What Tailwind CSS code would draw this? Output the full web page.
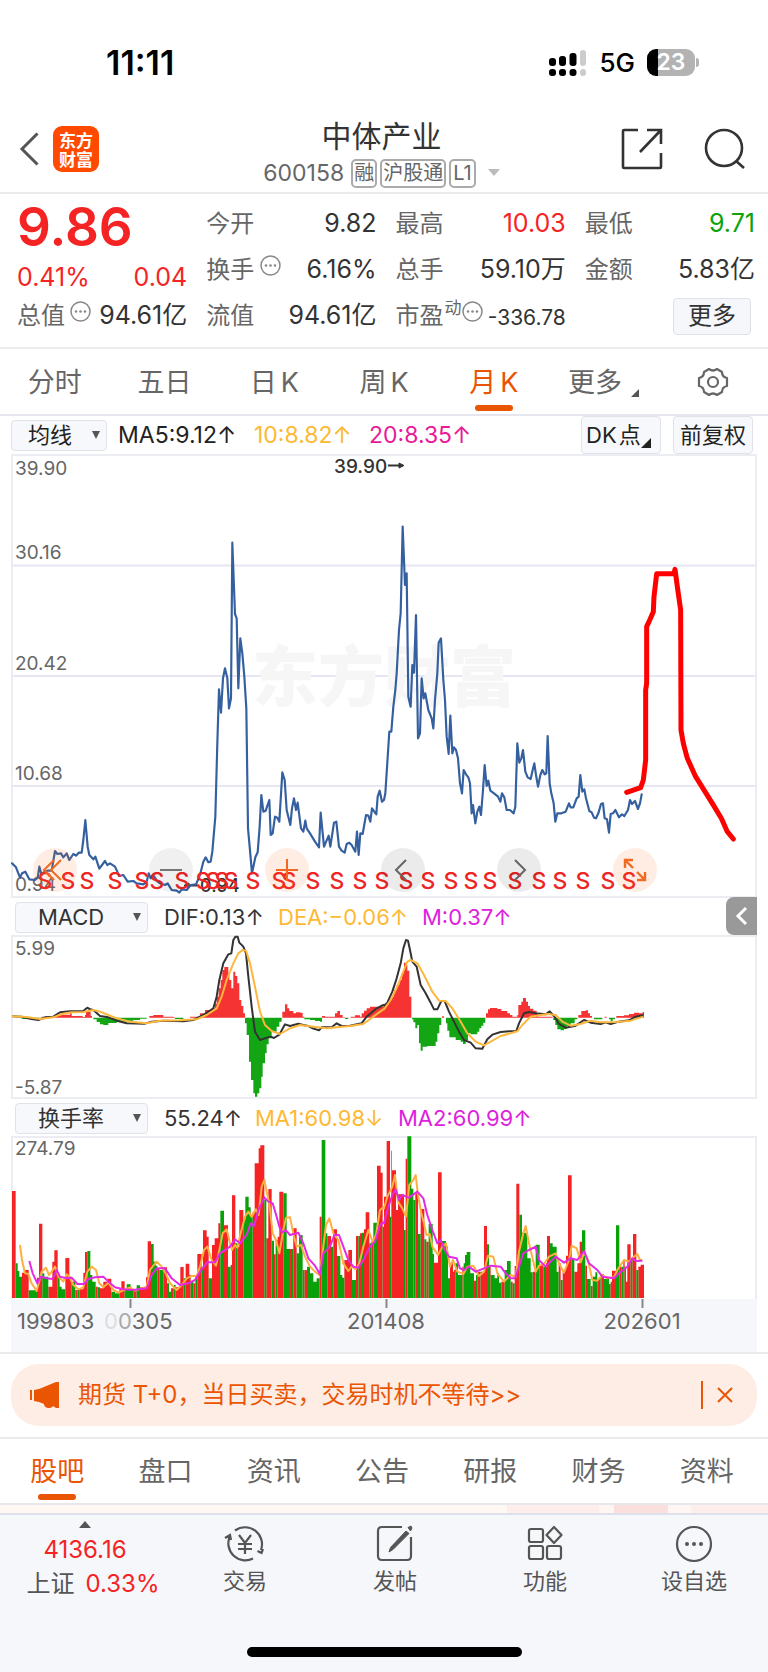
<!DOCTYPE html>
<html lang="zh-CN">
<head>
<meta charset="utf-8">
<meta name="viewport" content="width=device-width, initial-scale=1">
<title>中体产业 600158</title>
<script src="https://cdn.jsdelivr.net/npm/@tailwindcss/browser@4"></script>
</head>
<body class="bg-white font-['Inter','Noto_Sans_CJK_SC',sans-serif] text-[#333] min-h-screen flex flex-col">

<!-- status bar -->
<div class="flex items-center justify-between h-[100px] pt-[25px] pl-[106px] pr-[69px] text-black">
  <span class="text-[34px] leading-8 font-semibold">11:11</span>
  <div class="flex items-center gap-3">
    <svg class="w-[38px] h-[28px]" viewBox="0 0 38 28" aria-hidden="true">
      <g fill="#000"><rect x="0" y="9" width="7" height="8" rx="3"/><rect x="10" y="7" width="7" height="10" rx="3"/><rect x="20.500" y="4" width="7" height="13" rx="3"/><rect x="0" y="20" width="7" height="7" rx="3"/><rect x="10" y="20" width="7" height="7" rx="3"/><rect x="20.500" y="20" width="7" height="7" rx="3"/></g>
      <g fill="#ccc"><rect x="31" y="1" width="6" height="16" rx="3"/><rect x="31" y="20" width="6" height="7" rx="3"/></g>
    </svg>
    <span class="text-[26px] leading-8 font-medium">5G</span>
    <div class="flex items-center gap-px">
      <div class="w-[48px] h-[27px] rounded-[9px] bg-[linear-gradient(90deg,#000_23%,#b3b3b3_23%)] text-white text-[23px] leading-[27px] font-semibold text-center">23</div>
      <div class="w-[3px] h-[9px] rounded-r-full bg-[#b3b3b3]"></div>
    </div>
  </div>
</div>

<!-- title bar -->
<header class="flex items-center justify-between h-[94px] pl-[19px] pr-[22px] pt-[6px] border-b-2 border-[#ebebed]">
  <div class="flex items-center gap-[14px] w-[130px]">
    <button aria-label="返回"><svg class="w-5 h-[34px]" viewBox="0 0 20 34" fill="none" stroke="#555" stroke-width="3"><path d="M18.500 1.500 3 17l15.500 15.500"/></svg></button>
    <div class="w-[46px] h-[46px] rounded-[9px] bg-[#ff4a00] text-white text-[17px] leading-[19px] font-bold font-['Noto_Sans_CJK_SC',sans-serif] flex flex-col items-center justify-center"><span>东方</span><span>财富</span></div>
  </div>
  <div class="flex flex-col items-center pt-[10px]">
    <h1 class="text-[30px] leading-[38px]">中体产业</h1>
    <div class="flex items-center gap-[3px] h-9 text-[#666]">
      <span class="text-[23px] mr-[4px]">600158</span>
      <span class="border-2 border-[#aaa] rounded-[5px] px-px text-[20px] leading-[25px]">融</span>
      <span class="border-2 border-[#aaa] rounded-[5px] px-px text-[20px] leading-[25px]">沪股通</span>
      <span class="border-2 border-[#aaa] rounded-[5px] px-[2px] text-[20px] leading-[25px]">L1</span>
      <svg class="w-3 h-2 ml-[9px]" viewBox="0 0 12 8" fill="#bbb"><path d="M0 0h12L6 7z"/></svg>
    </div>
  </div>
  <div class="flex items-center justify-end gap-[41px] w-[132px]">
    <button aria-label="分享"><svg class="w-[42px] h-[42px]" viewBox="0 0 42 42" fill="none" stroke="#333" stroke-width="2.600"><path d="M17 2H3q-1 0-1 1v36q0 1 1 1h36q1 0 1-1V25M26 2h14v14M40 2 19 24"/></svg></button>
    <button aria-label="搜索"><svg class="w-[42px] h-[42px]" viewBox="0 0 42 42" fill="none" stroke="#333" stroke-width="2.600"><circle cx="20" cy="20" r="18"/><path d="m32 33 8 7"/></svg></button>
  </div>
</header>

<!-- quote -->
<section class="grid grid-cols-4 gap-x-[19px] pl-[17px] pr-[13px] pt-[7px] pb-[8px] text-[25px] border-b-2 border-[#ebebed] whitespace-nowrap">
  <div class="text-[#f42424]">
    <div class="h-[52px] text-[53px] leading-[52px] font-semibold">9.86</div>
    <div class="h-[40px] flex items-end justify-between leading-8"><span>0.41%</span><span>0.04</span></div>
    <div class="h-[46px] flex items-center justify-between text-[#333]">
      <span class="flex text-[#666] text-[24px]">总值<svg class="w-[21px] h-[21px] mt-[3px] ml-[5px]" viewBox="0 0 21 21"><use href="#dots"/></svg></span><span>94.61亿</span></div>
  </div>
  <div>
    <div class="h-[46px] flex items-center justify-between"><span class="text-[#666] text-[24px]">今开</span><span>9.82</span></div>
    <div class="h-[46px] flex items-center justify-between"><span class="flex text-[#666] text-[24px]">换手<svg class="w-[21px] h-[21px] mt-[3px] ml-[6px]" viewBox="0 0 21 21"><use href="#dots"/></svg></span><span>6.16%</span></div>
    <div class="h-[46px] flex items-center justify-between"><span class="text-[#666] text-[24px]">流值</span><span>94.61亿</span></div>
  </div>
  <div>
    <div class="h-[46px] flex items-center justify-between"><span class="text-[#666] text-[24px]">最高</span><span class="text-[#f42424]">10.03</span></div>
    <div class="h-[46px] flex items-center justify-between"><span class="text-[#666] text-[24px]">总手</span><span>59.10万</span></div>
    <div class="h-[46px] flex items-center justify-between"><span class="flex text-[#666] text-[24px]">市盈<span class="text-[17px] leading-5 ml-px">动</span><svg class="w-[21px] h-[21px] mt-[3px]" viewBox="0 0 21 21"><use href="#dots"/></svg></span><span class="text-[21px] pt-1">-336.78</span></div>
  </div>
  <div>
    <div class="h-[46px] flex items-center justify-between"><span class="text-[#666] text-[24px]">最低</span><span class="text-[#0ca30c]">9.71</span></div>
    <div class="h-[46px] flex items-center justify-between"><span class="text-[#666] text-[24px]">金额</span><span>5.83亿</span></div>
    <div class="h-[46px] flex items-center justify-end pr-1"><button class="w-[78px] h-[37px] rounded border border-[#dfe1ea] bg-[#f6f7fa] text-[24px] leading-8">更多</button></div>
  </div>
</section>

<!-- period tabs -->
<nav class="grid grid-cols-7 h-[67px] border-b-2 border-[#e6e7ee] text-[27px] text-[#666] whitespace-nowrap">
  <button class="pt-[3px]">分时</button>
  <button class="pt-[3px]">五日</button>
  <button class="pt-[3px]">日<span class="ml-1">K</span></button>
  <button class="pt-[3px]">周<span class="ml-1">K</span></button>
  <button class="pt-[3px] relative text-[#ea5504]">月<span class="ml-1">K</span><span class="absolute bottom-[3px] left-1/2 -translate-x-1/2 w-[38px] h-[6px] rounded-full bg-[#ea5504]"></span></button>
  <button class="pt-[3px] flex items-center justify-center gap-[9px]">更多<svg class="w-2 h-2 mt-5" viewBox="0 0 8 8" fill="#555"><path d="M8 0v8H0z"/></svg></button>
  <button class="flex items-center justify-center" aria-label="设置"><svg class="w-8 h-[30px]" viewBox="0 0 32 30" fill="none" stroke="#666" stroke-width="2.200" stroke-linejoin="round"><path d="M12 2q4 3 8 0l5 3q0 5 5 6v8q-5 1-5 6l-5 3q-4-3-8 0l-5-3q0-5-5-6v-8q5-1 5-6z"/><circle cx="16" cy="15" r="5"/></svg></button>
</nav>

<main class="px-[11px]">
  <!-- moving averages -->
  <div class="flex items-center h-[38px] text-[22px] text-[#222] whitespace-nowrap">
    <button class="flex items-center justify-between w-[96px] h-[31px] pl-4 pr-[6px] rounded border border-[#e0e2ea] bg-[#f7f8fb]">均线<svg class="w-2 h-2" viewBox="0 0 8 8" fill="#555"><path d="M0 0h8L4 8z"/></svg></button>
    <span class="w-[147px] pl-[11px] text-[23px]">MA5:9.12↑</span>
    <span class="w-[115px] text-[23px] text-[#fdb933]">10:8.82↑</span>
    <span class="text-[23px] text-[#e8199a]">20:8.35↑</span>
    <button class="flex items-center ml-auto w-[80px] h-[38px] pl-1 rounded border border-[#e0e2ea] bg-[#f7f8fb]">DK<span class="ml-[2px]">点</span><svg class="w-[10px] h-[10px] mt-4" viewBox="0 0 8 8" fill="#222"><path d="M8 0v8H0z"/></svg></button>
    <button class="ml-[12px] mr-[4px] w-[80px] h-[38px] rounded border border-[#e0e2ea] bg-[#f7f8fb]">前复权</button>
  </div>

  <!-- price chart -->
  <div class="relative">
    <svg class="block w-full" viewBox="11 454 746 444" font-size="19" fill="#666">
      <g fill="none" stroke-width="2"><path stroke="#ecedf3" d="M12 455H756V897H12z"/><path stroke="#e6e7f2" d="M12 565.500H756M12 676H756M12 786H756"/></g>
      <text x="252" y="701" font-size="66" font-weight="900" fill="#f6f6f7">东方财富</text>
      <g><text x="15" y="475">39.90</text><text x="15" y="559">30.16</text><text x="15" y="670">20.42</text><text x="15" y="780">10.68</text><text x="15" y="891">0.94</text></g>
      <g fill="#333" font-weight="500"><text x="334" y="473">39.90</text><text x="200" y="892" font-size="18">0.94</text></g>
      <g stroke="#333" stroke-width="2" fill="#333"><path d="M388 465.500h12"/><path d="m399 463 5 2.500-5 2.500zM189 883l-5 2.500 5 2.500z" stroke-width="1"/><path d="M188 885.500h9"/></g>
      <g transform="translate(0 450) scale(.33333)" fill="none" stroke-linejoin="round" stroke-linecap="round">
        <path id="price" stroke="#35609f" stroke-width="6.500"/>
        <path id="sketch" stroke="#fe0000" stroke-width="15"/>
      </g>
      <g id="marks" fill="#ee2525" font-size="23" font-weight="500" text-anchor="middle"></g>
    </svg>
    <div class="absolute left-[22px] bottom-[6px] flex gap-[72px]">
      <button aria-label="最早" class="w-11 h-11 rounded-full bg-[#ff6a1a]/12"><svg viewBox="0 0 44 44" fill="none" stroke="#f26a21" stroke-width="2"><path d="M21 12 11 22l10 10M28 12 18 22l10 10"/></svg></button>
      <button aria-label="缩小" class="w-11 h-11 rounded-full bg-black/6"><svg viewBox="0 0 44 44" fill="none" stroke="#777" stroke-width="2"><path d="M11 22h22"/></svg></button>
      <button aria-label="放大" class="w-11 h-11 rounded-full bg-[#ff6a1a]/12"><svg viewBox="0 0 44 44" fill="none" stroke="#f26a21" stroke-width="2"><path d="M11 22h22M22 11v22"/></svg></button>
      <button aria-label="左移" class="w-11 h-11 rounded-full bg-black/8"><svg viewBox="0 0 44 44" fill="none" stroke="#666" stroke-width="2"><path d="M25 12 15 22l10 10"/></svg></button>
      <button aria-label="右移" class="w-11 h-11 rounded-full bg-black/8"><svg viewBox="0 0 44 44" fill="none" stroke="#666" stroke-width="2"><path d="m18 12 10 10-10 10"/></svg></button>
      <button aria-label="全屏" class="w-11 h-11 rounded-full bg-[#ff6a1a]/12"><svg viewBox="0 0 44 44" fill="none" stroke="#f26a21" stroke-width="2.400"><path d="M12 20v-8h8M12 12l8 8M32 24v8h-8M32 32l-8-8"/></svg></button>
    </div>
  </div>

  <!-- MACD -->
  <div class="relative flex items-center h-[37px] pl-1 pt-px text-[22px] text-[#333] whitespace-nowrap">
    <button class="flex items-center justify-between w-[133px] h-[31px] pl-[22px] pr-[6px] rounded border border-[#e0e2ea] bg-[#f7f8fb]">MACD<svg class="w-2 h-2" viewBox="0 0 8 8" fill="#555"><path d="M0 0h8L4 8z"/></svg></button>
    <span class="w-[130px] pl-4">DIF:0.13↑</span>
    <span class="w-[144px] text-[#fdb933]">DEA:−0.06↑</span>
    <span class="text-[#dd22dd]">M:0.37↑</span>
    <button aria-label="展开" class="absolute right-0 -top-px w-[31px] h-[38px] rounded-l-lg bg-[#999]"><svg viewBox="0 0 31 38" fill="none" stroke="#fff" stroke-width="3"><path d="m20 11-8 8 8 8"/></svg></button>
  </div>
  <svg class="block w-full" viewBox="11 935 746 164" font-size="19" fill="#666">
    <path d="M12 936H756V1098H12z" fill="none" stroke="#ecedf3" stroke-width="2"/>
    <text x="15" y="955">5.99</text><text x="15" y="1094">-5.87</text>
    <g transform="translate(0 900) scale(.33333)" fill="none" stroke-linejoin="round">
      <path id="macdUp" fill="#f53333"/><path id="macdDown" fill="#14a514"/>
      <path id="dif" stroke="#333" stroke-width="6"/><path id="dea" stroke="#fcb73c" stroke-width="6"/>
    </g>
  </svg>

  <!-- turnover -->
  <div class="flex items-center h-[37px] pl-1 pt-px text-[22px] text-[#333] whitespace-nowrap">
    <button class="flex items-center justify-between w-[133px] h-[31px] pl-[22px] pr-[6px] rounded border border-[#e0e2ea] bg-[#f7f8fb]">换手率<svg class="w-2 h-2" viewBox="0 0 8 8" fill="#555"><path d="M0 0h8L4 8z"/></svg></button>
    <span class="w-[107px] pl-4">55.24↑</span>
    <span class="w-[143px] text-[#fdb933]">MA1:60.98↓</span>
    <span class="text-[#dd22dd]">MA2:60.99↑</span>
  </div>
  <svg class="block w-full" viewBox="11 1136 746 216" font-size="22" fill="#666">
    <path d="M12 1299V1137H756V1299" fill="none" stroke="#ecedf3" stroke-width="2"/>
    <path d="M11 1299H757V1352H11z" fill="#f6f7fa"/>
    <text x="15" y="1155" font-size="19">274.79</text>
    <g transform="translate(0 1100) scale(.33333)" fill="none" stroke-linejoin="round">
      <path id="volUp" fill="#f52323"/><path id="volDown" fill="#0aa00a"/>
      <path id="ma1" stroke="#fcb040" stroke-width="6"/><path id="ma2" stroke="#e22be2" stroke-width="6"/>
    </g>
    <path d="M130.500 1299v9M386.500 1299v9M642.500 1299v9" stroke="#888" stroke-width="2"/>
    <text x="17" y="1329">199803</text>
    <text x="104" y="1329"><tspan fill="#ddd">0</tspan><tspan fill="#aaa">0</tspan>305</text>
    <text x="386" y="1329" text-anchor="middle">201408</text>
    <text x="642" y="1329" text-anchor="middle">202601</text>
  </svg>
</main>

<!-- promotion -->
<div class="border-y-2 border-[#ebebee] px-[11px] pt-[10px] pb-[11px]">
  <div class="flex items-center h-[62px] rounded-[28px] bg-[#feede5] pl-[19px] pr-[24px] text-[#ea5504]">
    <svg class="w-[29px] h-[26px]" viewBox="0 0 29 26" fill="#ea5504"><path d="M0 8h2v10H0zM4 8l5-1 17-7h3v26h-3l-3-2q-1 2-5 2-4-1-4-4l-5-2-5-1z"/></svg>
    <a href="#" class="ml-[19px] text-[24px]">期货 T+0，当日买卖，交易时机不等待&gt;&gt;</a>
    <span class="ml-auto w-[2px] h-7 bg-[#ea5504]"></span>
    <button aria-label="关闭" class="ml-[14px]"><svg class="w-4 h-4" viewBox="0 0 16 16" stroke="#ea5504" stroke-width="2"><path d="m1 1 14 14M15 1 1 15"/></svg></button>
  </div>
</div>

<!-- content tabs -->
<nav class="grid grid-cols-7 h-[66px] pl-[3px] pr-[7px] text-[27px] text-[#666] border-b-2 border-[#e8e8ec]">
  <button class="relative pt-[3px] text-[#ea5504]">股吧<span class="absolute bottom-[3px] left-1/2 -translate-x-1/2 w-[38px] h-[6px] rounded-full bg-[#ea5504]"></span></button>
  <button class="pt-[3px]">盘口</button><button class="pt-[3px]">资讯</button><button class="pt-[3px]">公告</button><button class="pt-[3px]">研报</button><button class="pt-[3px]">财务</button><button class="pt-[3px]">资料</button>
</nav>
<div class="h-2 bg-[linear-gradient(90deg,#fff7f2_66%,#fdeeec_66%_78%,#fff5f3_78%_80%,#fbdfdc_80%_87%,#fff5f3_87%_90%,#fdeeec_90%)]"></div>

<!-- bottom bar -->
<footer class="flex-1 flex flex-col justify-between bg-[#f6f7fa] border-t-2 border-[#dfe1ea] pb-[15px]">
  <div class="grid grid-cols-[170fr_150fr_150fr_150fr_148fr] text-[22px] text-[#555] whitespace-nowrap">
    <button class="flex flex-col items-center pt-[6px] text-[24px] text-[#f42424]">
      <svg class="w-3 h-[7px]" viewBox="0 0 12 7" fill="#555"><path d="M6 0l6 7H0z"/></svg>
      <span class="leading-8 mt-[6px]">4136.16</span>
      <span class="leading-9 pl-4"><span class="text-[#555] mr-[11px]">上证</span>0.33%</span>
    </button>
    <button class="flex flex-col items-center pt-[10px] gap-1">
      <svg class="w-[42px] h-[38px]" viewBox="0 0 42 38" fill="none" stroke="#555" stroke-width="2.200"><path d="M11 5.500A17 17 0 0 1 37 25M39 24l-1.500 4-4-2M29 33.500A17 17 0 0 1 6 11M1 13l5-3 1 5M15 10l6 8 6-8M14 19h14M14 24h14M21 18v11"/></svg>
      <span class="leading-7">交易</span></button>
    <button class="flex flex-col items-center pt-[10px] gap-1">
      <svg class="w-[38px] h-[38px]" viewBox="0 0 38 38" fill="none" stroke="#555" stroke-width="2.200"><path d="M26 2H6Q2 2 2 6v25q0 4 4 4h25q4 0 4-4V12"/><path d="m30 6 3 2.500-16 16L13 27l1.500-4.500zM32 2.500 35 1l1 2-1.500 3z" fill="#555" stroke-width="1"/></svg>
      <span class="leading-7">发帖</span></button>
    <button class="flex flex-col items-center pt-[10px] gap-1">
      <svg class="w-[38px] h-[38px]" viewBox="0 0 38 38" fill="none" stroke="#555" stroke-width="2.200"><rect x="3" y="4" width="14" height="13" rx="2"/><rect x="3" y="21" width="14" height="13" rx="2"/><rect x="21" y="21" width="14" height="13" rx="2"/><path d="m28 2 7.500 8-7.500 8-7.500-8z" stroke-linejoin="round"/></svg>
      <span class="leading-7">功能</span></button>
    <button class="flex flex-col items-center pt-[10px] gap-1">
      <svg class="w-[38px] h-[38px]" viewBox="0 0 38 38" fill="none" stroke="#555" stroke-width="2.200"><circle cx="19" cy="19" r="17"/><g fill="#555" stroke="none"><circle cx="12" cy="19" r="2"/><circle cx="19" cy="19" r="2"/><circle cx="26" cy="19" r="2"/></g></svg>
      <span class="leading-7">设自选</span></button>
  </div>
  <div class="self-center w-[275px] h-[10px] rounded-full bg-black"></div>
</footer>

<svg width="0" height="0" class="absolute"><defs><g id="dots"><circle cx="10.500" cy="10.500" r="9.500" fill="none" stroke="#888" stroke-width="1.500"/><g fill="#888"><circle cx="6" cy="10.500" r="1.300"/><circle cx="10.500" cy="10.500" r="1.300"/><circle cx="15" cy="10.500" r="1.300"/></g></g></defs></svg>

<script>
// Series are stored as "x,y" pairs in two halves; the second half starts at x = 1152.
const HALF = 1152;
const join = (a, b) => [...a.trim().split(/\s+/).map(p => p.split(',')).map(([x, y, c]) => [+x, +y, c]),
                        ...b.trim().split(/\s+/).filter(Boolean).map(p => p.split(',')).map(([x, y, c]) => [+x + HALF, +y, c])];
const line = (id, a, b) => document.getElementById(id).setAttribute('d', 'M' + join(a, b).map(p => p[0] + ' ' + p[1]).join('L'));

line('price', `36,1240 48,1252 60,1283 66,1270 76,1265 88,1288 105,1290 113,1283 118,1250 125,1275 133,1265 142,1262 155,1262 165,1203 172,1212 183,1210 190,1222 200,1210 208,1230 220,1212 228,1217 236,1208 245,1208 250,1170 256,1110 263,1190 268,1215 280,1228 286,1220 298,1256 315,1233 322,1245 330,1240 345,1250 358,1278 370,1275 383,1295 400,1293 410,1300 430,1303 440,1295 446,1270 452,1285 460,1275 470,1292 480,1300 495,1305 503,1300 515,1320 530,1322 538,1328 545,1318 560,1320 572,1305 588,1303 600,1275 610,1235 617,1222 625,1237 632,1235 637,1205 646,1100 652,880 657,718 663,788 669,685 675,655 682,685 687,775 693,745 697,278 705,492 710,505 715,715 721,565 727,610 733,680 739,775 744,1135 749,1190 756,1270 766,1222 773,1207 779,1130 784,1035 790,1085 797,1082 808,1050 812,1155 818,1150 825,1100 832,1103 838,1115 847,967 854,990 860,1080 871,1125 876,1075 882,1045 888,1080 893,1058 903,1135 910,1145 916,1112 920,1135 930,1150 945,1175 957,1192 962,1088 972,1190 986,1157 991,1190 1002,1118 1009,1115 1017,1190 1025,1202 1034,1208 1040,1182 1048,1178 1055,1185 1066,1205 1071,1145 1076,1215 1081,1150 1088,1152 1098,1095 1105,1097 1111,1115 1116,1075 1123,1085 1129,1093 1133,1040 1139,1022 1146,1055 1152,1050`,
`4,1030 16,845 22,845 28,770 34,720 38,670 45,540 50,490 56,230 63,405 68,370 73,740 80,770 85,645 90,668 96,495 102,865 108,850 113,685 119,745 124,730 133,780 143,805 148,835 153,750 160,670 164,578 171,565 178,690 183,750 188,860 194,912 199,797 205,910 210,892 216,900 222,925 228,1000 234,1030 239,960 246,973 253,982 258,1000 263,1090 267,1065 274,1120 280,1085 286,1070 291,1095 297,1020 302,945 308,1008 313,992 319,1022 330,1030 342,1040 349,1055 354,1030 361,1042 368,1080 378,1080 389,1090 394,1070 400,880 406,938 412,925 417,900 424,965 431,982 440,987 446,960 451,940 456,975 462,1010 469,975 475,960 482,973 487,970 491,858 497,1000 502,1030 509,1060 514,1115 520,1090 532,1090 545,1085 551,1070 555,1060 560,1072 568,1072 578,1045 584,1040 589,975 595,1025 601,1018 606,1045 616,1083 623,1087 630,1103 636,1105 643,1090 651,1062 657,1060 662,1105 669,1108 675,1148 680,1092 687,1090 694,1080 705,1102 714,1093 721,1098 732,1080 738,1050 744,1062 753,1053 762,1077 768,1060 773,1033`);
line('sketch', `1880,1027 1922,1013`, `778,990 785,930 785,720 788,700 788,530 795,515 808,485 810,440 818,371 870,371 873,358 880,410 890,480 891,840 898,880 910,925 935,980 985,1060 1012,1105 1030,1145 1048,1167`);
line('dif', `36,349 65,350 90,356 115,360 135,352 160,350 180,337 210,334 250,333 256,328 262,323 270,328 280,330 300,348 325,352 350,362 380,370 435,371 455,365 490,362 550,364 580,360 610,345 640,325 650,290 658,240 670,190 685,163 694,160 700,120 706,110 713,110 718,128 730,140 738,160 745,230 755,320 765,395 780,420 795,415 812,410 822,414 838,404 855,373 870,378 895,371 910,375 925,378 940,386 957,391 965,382 995,382 1010,370 1025,378 1050,377 1085,370 1100,350 1130,325 1150,315`,
`0,317 10,308 25,275 38,235 50,190 58,145 66,120 72,122 78,150 85,185 98,200 110,255 125,280 140,308 150,328 160,328 172,303 182,303 195,335 210,365 225,395 240,420 260,428 275,445 295,446 310,418 325,404 350,396 375,394 397,393 405,370 420,340 435,336 455,340 485,343 497,334 510,348 525,372 545,383 575,377 600,360 620,368 650,372 665,367 680,372 700,366 735,361 755,350 778,346`);
line('dea', `36,349 80,351 120,357 160,352 185,342 215,337 250,336 280,330 300,335 325,345 350,355 390,365 440,370 480,362 540,361 590,358 620,345 650,325 665,290 680,240 700,190 715,160 728,150 738,152 750,190 765,260 780,335 795,375 815,393 840,402 870,385 900,375 940,380 980,385 1050,378 1090,372 1120,350 1150,328`,
`0,328 20,300 40,260 60,210 70,185 80,180 100,190 120,225 145,275 165,302 185,303 205,325 230,365 250,400 275,425 300,436 320,425 350,408 400,394 415,375 440,350 490,342 515,345 535,365 560,377 590,372 620,362 650,367 700,366 740,362 778,350`);
line('ma1', `60,435 66,480 75,520 85,522 95,550 110,573 125,515 138,503 147,525 155,515 165,500 175,530 190,545 200,523 208,530 220,555 235,568 250,562 262,515 275,500 288,510 298,550 310,562 325,548 340,570 355,578 372,570 390,562 405,572 425,565 440,560 450,510 470,485 485,500 497,520 510,550 530,570 545,555 560,535 575,528 590,528 600,500 612,450 622,440 635,480 648,497 660,440 668,400 680,388 690,430 696,450 705,435 712,443 722,400 735,350 745,335 755,350 768,328 776,345 785,260 793,240 800,275 808,310 818,400 828,420 838,460 850,390 858,353 870,352 880,400 890,440 903,435 915,470 930,500 945,515 958,525 970,440 978,375 988,355 1000,400 1015,420 1030,490 1045,513 1055,500 1068,507 1078,490 1090,440 1105,390 1118,425 1128,405 1140,330 1150,322`,
`0,325 10,290 25,260 33,225 42,305 55,325 66,350 76,255 88,240 95,225 102,285 112,340 120,370 127,405 137,402 145,440 162,465 175,440 186,430 198,500 207,480 220,515 238,522 250,500 268,497 285,528 300,515 312,467 328,470 340,520 360,545 380,525 395,530 405,455 418,400 425,378 435,430 447,480 455,515 465,497 480,492 495,470 515,460 525,490 540,518 555,480 563,437 578,445 590,487 600,458 612,480 625,540 640,542 655,525 670,535 690,532 700,510 720,480 735,485 750,470 760,462 768,480 775,480`);
line('ma2', `88,483 98,520 112,550 122,530 140,535 158,537 170,510 180,530 200,535 215,533 232,552 252,552 265,537 285,532 310,530 325,545 345,562 370,568 400,570 440,565 455,525 470,505 495,505 515,535 540,555 570,548 585,540 600,515 622,487 645,487 660,460 690,440 705,418 720,430 740,405 752,370 762,378 775,330 793,292 805,305 818,310 830,350 838,380 846,398 857,390 870,405 895,398 910,430 925,475 945,497 960,523 970,460 990,440 1003,405 1017,405 1030,440 1045,480 1060,500 1075,503 1090,480 1110,440 1125,425 1140,375 1150,368`,
`0,370 10,330 25,285 35,268 45,300 55,285 75,293 100,275 118,295 130,345 145,390 160,430 170,420 180,445 195,470 218,475 228,505 240,510 255,500 275,515 300,505 320,497 350,500 365,520 380,535 393,535 405,500 418,460 435,450 455,440 465,480 485,500 500,485 515,470 540,488 560,475 580,480 600,453 615,490 640,510 655,530 690,535 705,520 730,500 745,475 755,483 775,482`);

// Bars: every entry holds its value until the next entry begins.
const bars = (pts, base, end, isUp, upId, downId) => {
  let up = '', down = '';
  pts.forEach((p, i) => {
    const next = i + 1 < pts.length ? pts[i + 1][0] : end;
    const d = `M${p[0]} ${base}V${p[1]}H${next}V${base}z`;
    if (p[1] === base) return;
    if (isUp(p)) up += d; else down += d;
  });
  document.getElementById(upId).setAttribute('d', up);
  document.getElementById(downId).setAttribute('d', down);
};
bars(join(`36,353 65,357 110,358 118,355 125,350 160,350 165,346 185,344 210,340 215,348 248,351 255,345 258,334 267,336 272,348 276,353 280,358 290,366 300,373 310,375 325,369 350,365 380,362 400,360 420,356 440,353 448,348 460,345 475,345 490,350 520,352 525,357 550,353 570,350 600,340 615,330 640,325 645,312 650,290 656,265 662,240 667,210 673,201 685,220 688,240 694,265 700,215 706,228 712,250 718,300 724,318 730,340 735,370 740,405 747,485 753,540 760,580 765,590 772,580 778,565 784,530 788,490 795,460 800,433 806,415 815,395 830,380 838,365 845,353 847,335 855,313 862,325 868,333 880,340 888,337 900,338 908,350 913,358 930,360 945,363 960,365 966,348 975,350 1000,350 1005,340 1012,333 1020,345 1028,352 1035,357 1045,353 1052,350 1065,346 1080,350 1085,340 1092,332 1100,325 1110,320`,
`0,318 8,310 15,300 22,290 30,270 38,255 46,240 53,220 60,188 66,195 70,212 76,290 82,353 84,358 88,367 94,385 100,375 105,430 110,452 116,440 130,438 155,425 160,400 166,375 172,353 174,349 180,353 186,370 190,392 196,412 215,420 230,425 237,432 245,420 252,400 260,403 280,395 286,385 292,377 298,368 304,353 306,340 312,328 318,324 340,327 352,333 370,340 378,345 385,350 400,345 403,315 412,305 417,294 426,305 432,318 438,326 448,332 458,340 462,350 500,350 506,353 508,360 514,375 520,388 530,391 540,387 548,378 560,370 572,358 580,353 583,345 592,333 605,331 612,340 618,348 624,353 630,358 655,353 662,350 668,353 675,358 680,364 686,358 693,353 697,348 720,346 735,342 750,338 765,340 776,336`),
353, 1932, p => p[1] < 353, 'macdUp', 'macdDown');
bars(join(`36,273,r 47,490,g 53,513,g 58,530,g 66,518,r 72,510,r 86,571,g 111,533,r 117,371,r 127,520,g 133,530,g 145,560,r 157,485,r 163,451,r 173,525,g 179,560,g 185,568,g 196,474,r 208,530,r 214,545,g 226,570,r 232,568,g 238,568,r 250,518,r 255,456,r 262,453,g 271,525,g 277,545,g 287,560,r 293,562,g 300,565,r 310,545,r 322,536,r 334,575,g 345,580,g 358,568,r 364,544,r 374,570,g 380,553,g 392,568,g 400,570,r 410,556,g 420,562,r 438,532,r 443,424,r 453,432,g 461,485,g 467,497,g 472,505,r 478,510,g 490,502,r 501,550,g 507,575,g 513,565,r 521,555,g 527,562,r 541,501,r 551,535,g 557,491,r 568,525,r 572,545,g 580,550,r 586,530,g 592,462,r 605,500,g 609,391,r 620,410,r 626,535,g 636,435,r 644,415,r 655,370,r 661,332,g 672,376,r 684,500,g 692,495,r 696,286,r 706,430,g 712,440,r 718,330,r 730,360,g 736,290,g 746,322,g 752,350,g 758,335,r 764,190,r 776,145,r 781,136,r 793,300,g 799,415,r 805,267,r 815,422,g 822,463,r 827,420,g 833,410,r 838,275,r 850,280,g 860,447,g 870,447,r 876,447,g 880,385,r 890,460,g 897,405,g 908,510,r 914,510,g 918,510,r 921,500,g 930,520,g 940,545,g 950,535,g 959,350,r 965,120,g 976,400,g 982,408,r 993,440,g 1000,388,r 1011,468,g 1021,525,g 1027,533,g 1033,480,r 1045,450,r 1056,540,g 1068,408,r 1075,408,g 1080,400,r 1086,398,g 1092,388,r 1097,337,r 1108,430,g 1114,425,r 1120,368,g 1131,197,r 1142,218,r 1148,380,g`,
`0,290,r 8,123,r 18,350,g 22,152,r 24,211,r 36,330,r 42,283,r 60,390,g 65,176,r 70,109,g 82,266,g 88,300,r 90,300,g 94,280,r 102,402,g 110,327,r 121,418,g 127,425,r 134,372,g 146,462,g 150,488,r 162,217,r 173,423,g 186,440,g 192,535,g 198,490,r 207,515,g 210,510,r 214,490,g 222,525,g 235,500,r 239,490,g 243,465,g 248,456,g 259,520,g 270,542,r 276,525,g 280,515,r 290,515,g 294,515,r 300,378,r 309,433,g 315,500,r 320,525,g 332,535,g 340,520,g 345,548,g 352,545,r 362,510,g 369,483,g 380,545,r 386,550,g 392,498,r 397,251,r 406,344,g 414,398,g 430,475,g 440,517,g 446,515,r 455,434,g 467,495,r 478,500,g 486,490,r 489,408,r 498,430,g 506,440,g 518,515,g 524,490,r 530,540,g 536,510,r 546,467,r 552,226,r 563,475,g 571,515,r 580,490,r 587,425,r 594,391,g 604,497,r 609,537,g 620,558,r 626,530,g 634,517,g 640,540,r 645,530,r 649,533,g 652,523,r 660,537,g 675,552,r 680,545,g 684,512,r 696,376,g 706,500,r 712,500,g 718,480,r 722,500,g 726,545,r 730,433,r 740,475,g 745,475,r 747,402,r 757,510,g 763,500,r 770,494,r`),
594, 1932, p => p[2] === 'r', 'volUp', 'volDown');

const marks = document.getElementById('marks');
[135,203,260,346,427,472,546,608,640,665,692,758,838,867,940,1010,1079,1146,1217,1285,1354,1412,1469,1544,1618,1681,1750,1824,1887].forEach(x => {
  const t = document.createElementNS('http://www.w3.org/2000/svg', 'text');
  t.setAttribute('x', Math.round(x / 3)); t.setAttribute('y', 889); t.textContent = 'S';
  marks.appendChild(t);
});
</script>
</body>
</html>
